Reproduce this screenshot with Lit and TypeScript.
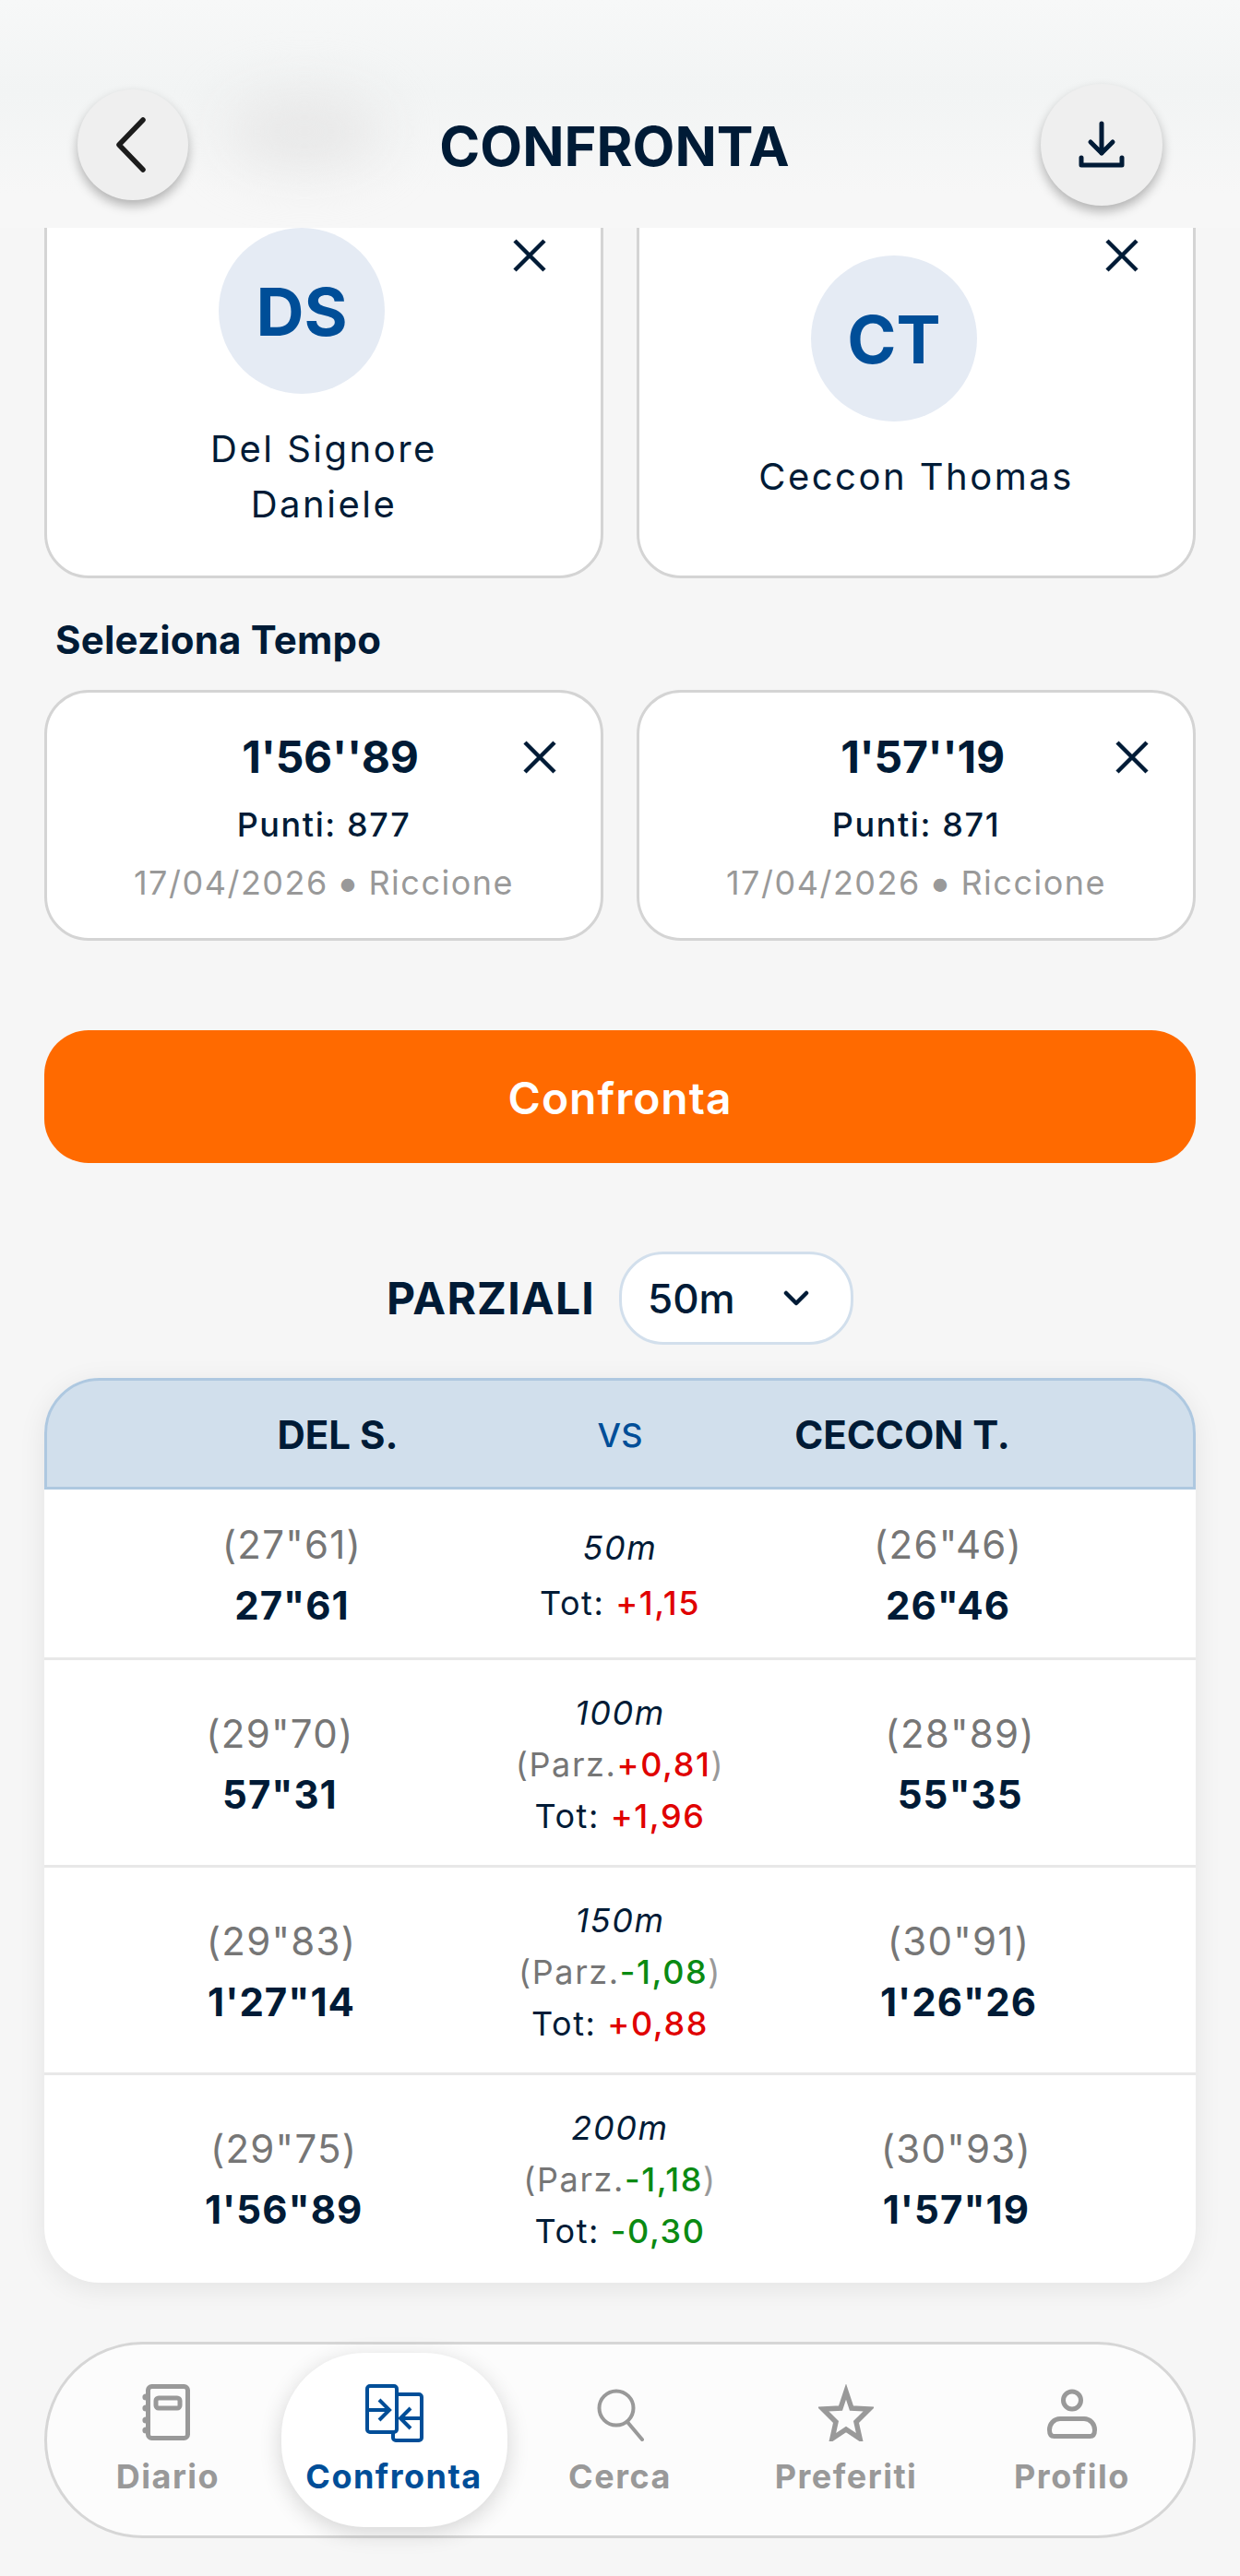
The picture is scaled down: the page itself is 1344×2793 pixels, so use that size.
import { LitElement, html, css, svg } from 'lit'
import { customElement } from 'lit/decorators.js'

type Diff = { value: string; up: boolean }
type Split = {
  dist: string
  lap?: Diff
  tot: Diff
  left: [string, string]
  right: [string, string]
}

const splits: Split[] = [
  { dist: '50m', tot: { value: '+1,15', up: true }, left: ['(27"61)', '27"61'], right: ['(26"46)', '26"46'] },
  { dist: '100m', lap: { value: '+0,81', up: true }, tot: { value: '+1,96', up: true }, left: ['(29"70)', '57"31'], right: ['(28"89)', '55"35'] },
  { dist: '150m', lap: { value: '-1,08', up: false }, tot: { value: '+0,88', up: true }, left: ['(29"83)', '1\'27"14'], right: ['(30"91)', '1\'26"26'] },
  { dist: '200m', lap: { value: '-1,18', up: false }, tot: { value: '-0,30', up: false }, left: ['(29"75)', '1\'56"89'], right: ['(30"93)', '1\'57"19'] },
]

const closeIcon = html`<svg width="36" height="36" viewBox="0 0 36 36" fill="none" stroke="currentColor" stroke-width="4.5"><path d="M2 2l32 32M34 2L2 34" /></svg>`

const navIcons = {
  diario: svg`<rect x="6.5" y="2.5" width="43" height="56" rx="4" fill="none" stroke="currentColor" stroke-width="5"/>
    <circle cx="4" cy="14" r="3.6" fill="currentColor"/><circle cx="4" cy="26" r="3.6" fill="currentColor"/>
    <circle cx="4" cy="39" r="3.6" fill="currentColor"/><circle cx="4" cy="50" r="3.6" fill="currentColor"/>
    <rect x="15" y="15" width="26" height="11" rx="3" fill="none" stroke="currentColor" stroke-width="5"/>`,
  confronta: svg`<rect x="30" y="11" width="31" height="50" rx="3" fill="none" stroke="currentColor" stroke-width="4"/>
    <rect x="2" y="2" width="32" height="50" rx="3" fill="#fff" stroke="currentColor" stroke-width="4"/>
    <path d="M2 28h24M15 17l11 11-11 11" fill="none" stroke="currentColor" stroke-width="4"/>
    <path d="M61 37H38M49 26L38 37l11 11" fill="none" stroke="currentColor" stroke-width="4"/>`,
  cerca: svg`<circle cx="22" cy="22" r="18.5" fill="none" stroke="currentColor" stroke-width="4"/>
    <path d="M34 37l16 19" fill="none" stroke="currentColor" stroke-width="4" stroke-linecap="round"/>`,
  preferiti: svg`<path d="M30 8l6 18 19 1-14 14 4 18-15-10-15 10 4-18L5 27l19-1z" fill="none" stroke="currentColor" stroke-width="5.500"/>`,
  profilo: svg`<circle cx="27" cy="12.500" r="9.500" fill="none" stroke="currentColor" stroke-width="5"/>
    <path d="M14 32.500h26c7 0 11.500 6 11.500 12 0 5-2 7-5 7H7.500c-3 0-5-2-5-7 0-6 4.500-12 11.500-12z" fill="none" stroke="currentColor" stroke-width="5"/>`,
}

const navItems = [
  { id: 'diario', label: 'Diario', w: 56, h: 62, vb: '0 0 56 62', mt: 0 },
  { id: 'confronta', label: 'Confronta', w: 63, h: 63, vb: '0 0 63 63', mt: 0 },
  { id: 'cerca', label: 'Cerca', w: 52, h: 58, vb: '0 0 52 58', mt: 4 },
  { id: 'preferiti', label: 'Preferiti', w: 60, h: 62, vb: '0 0 60 62', mt: 0 },
  { id: 'profilo', label: 'Profilo', w: 54, h: 54, vb: '0 0 54 54', mt: 5 },
] as const

@customElement('app-root')
export class AppRoot extends LitElement {
  static styles = css`
    :host {
      display: block;
      position: relative;
      height: 2793px;
      overflow: hidden;
      background: #f6f6f6;
      color: #001b36;
      font-family: Inter, "Liberation Sans", sans-serif;
    }

    /* top bar sits over the scrolled content */
    .topbar {
      position: absolute;
      inset: 0 0 auto 0;
      height: 247px;
      z-index: 5;
      overflow: hidden;
      background: linear-gradient(#f7f8f8, #f2f4f4 40%, #f7f7f7 85%);
    }
    .smudge {
      position: absolute;
      left: 245px;
      top: 100px;
      width: 170px;
      height: 85px;
      border-radius: 50%;
      background: #e8e8e8;
      filter: blur(28px);
    }
    .round {
      position: absolute;
      display: flex;
      align-items: center;
      justify-content: center;
      border-radius: 50%;
      background: #efefef;
      box-shadow: 0 6px 12px rgba(0, 0, 0, 0.28);
    }
    .back { left: 84px; top: 97px; width: 120px; height: 120px; color: #1c1c1c; }
    .download { left: 1128px; top: 91px; width: 132px; height: 132px; }
    .topbar h1 {
      position: absolute;
      left: 0;
      right: 0;
      top: 123px;
      margin: 0;
      padding-right: 12px;
      text-align: center;
      font-size: 59.5px;
      line-height: 70px;
      font-weight: 700;
    }

    main {
      padding: 197px 48px 0;
    }
    .pair {
      display: grid;
      grid-template-columns: 606px 606px;
      justify-content: space-between;
    }
    .card {
      position: relative;
      box-sizing: border-box;
      background: #fff;
      border: 3px solid #d4d4d4;
      border-radius: 48px;
    }
    .close {
      position: absolute;
      display: flex;
      color: #001b36;
    }
    .athlete {
      height: 430px;
      display: flex;
      flex-direction: column;
      align-items: center;
      justify-content: center;
      gap: 30px;
    }
    .athlete .close { right: 59px; top: 59px; }
    .avatar {
      width: 180px;
      height: 180px;
      border-radius: 50%;
      margin-left: -48px;
      background: #e5ebf4;
      color: #004e98;
      display: flex;
      align-items: center;
      justify-content: center;
      font-size: 72px;
      font-weight: 700;
    }
    .name {
      text-align: center;
      font-size: 40px;
      line-height: 60px;
      letter-spacing: 2.5px;
    }
    .section-label {
      margin: 42px 0 0 12px;
      font-size: 42px;
      line-height: 50px;
      font-weight: 700;
      letter-spacing: 0.2px;
    }
    .times {
      margin-top: 29px;
    }
    .time {
      height: 272px;
      display: flex;
      flex-direction: column;
      align-items: center;
    }
    .time .close { right: 48px; top: 52px; }
    .time-value {
      margin-top: 40px;
      font-size: 48px;
      line-height: 60px;
      font-weight: 700;
      letter-spacing: -0.3px;
      padding-left: 14px;
    }
    .points {
      margin-top: 21px;
      font-size: 36px;
      line-height: 44px;
      font-weight: 500;
      letter-spacing: 1.6px;
    }
    .date {
      margin-top: 19px;
      font-size: 36px;
      line-height: 44px;
      color: #999;
      letter-spacing: 1.5px;
    }
    .date span {
      font-size: 46px;
      line-height: 0;
      vertical-align: -3px;
      margin: 0 -3.5px;
    }

    .cta {
      display: flex;
      align-items: center;
      justify-content: center;
      margin-top: 97px;
      height: 144px;
      padding-top: 2px;
      box-sizing: border-box;
      border-radius: 48px;
      background: #ff6a00;
      color: #fff;
      font-size: 48px;
      font-weight: 600;
      letter-spacing: 1px;
    }

    .split-head {
      display: flex;
      align-items: center;
      justify-content: center;
      gap: 26px;
      margin-top: 96px;
    }
    .split-head strong {
      font-size: 48px;
      font-weight: 700;
      letter-spacing: 1.2px;
    }
    .select {
      box-sizing: border-box;
      width: 254px;
      height: 101px;
      padding: 0 44px 0 28px;
      display: flex;
      align-items: center;
      justify-content: space-between;
      background: #fff;
      border: 3px solid #d2dfec;
      border-radius: 48px;
      font-size: 44px;
      font-weight: 500;
    }

    .table {
      margin-top: 36px;
      border-radius: 60px;
      background: #fff;
      box-shadow: 0 6px 30px rgba(0, 0, 0, 0.08);
    }
    .table-head {
      box-sizing: border-box;
      height: 121px;
      padding-top: 2px;
      display: grid;
      grid-template-columns: repeat(3, 306px);
      justify-content: center;
      align-items: center;
      text-align: center;
      background: #d1dfec;
      border: 3px solid #aec8e0;
      border-radius: 60px 60px 0 0;
      font-size: 42px;
      font-weight: 700;
    }
    .table-head .vs {
      color: #004e98;
      font-size: 36px;
      font-weight: 500;
    }
    .row {
      box-sizing: border-box;
      display: flex;
      align-items: center;
      padding: 33px 0 29px;
      border-bottom: 3px solid #e8e8e8;
      text-align: center;
    }
    .row:last-child { border-bottom-color: transparent; }
    .side { flex: 1; }
    .side .lap {
      font-size: 42px;
      line-height: 54px;
      color: #767676;
      letter-spacing: 1.25px;
    }
    .side .cum {
      margin-top: 12px;
      font-size: 42px;
      line-height: 54px;
      font-weight: 700;
      letter-spacing: 1px;
    }
    .mid {
      font-size: 36px;
      line-height: 56px;
      letter-spacing: 1.6px;
      margin: -4px 0;
    }
    .short .mid { line-height: 60px; }
    .mid .dist { font-style: italic; }
    .mid .parz { color: #767676; white-space: nowrap; }
    .mid .parz i { font-style: normal; color: #999; }
    .mid b { font-weight: 500; }
    .up { color: #e00000; }
    .down { color: #0a8a12; }

    nav {
      box-sizing: border-box;
      margin-top: 64px;
      height: 213px;
      padding: 0 6px;
      display: grid;
      grid-template-columns: repeat(5, 245px);
      justify-content: center;
      align-items: center;
      border: 3px solid #d6d6d6;
      border-radius: 107px;
      background: #fcfcfc;
    }
    .tab {
      height: 189px;
      display: flex;
      flex-direction: column;
      align-items: center;
      padding-top: 34px;
      box-sizing: border-box;
      color: #999;
      font-size: 36px;
      font-weight: 700;
      letter-spacing: 1.5px;
    }
    .tab .icon {
      height: 63px;
      display: flex;
    }
    .tab span { margin-top: 15px; line-height: 44px; }
    .tab.active {
      color: #004e98;
      background: #fff;
      border-radius: 90px;
      box-shadow: 0 6px 24px rgba(0, 0, 0, 0.16);
    }
  `

  renderDiff(d: Diff) {
    return html`<b class=${d.up ? 'up' : 'down'}>${d.value}</b>`
  }

  renderRow(s: Split) {
    return html`
      <div class="row ${s.lap ? '' : 'short'}">
        <div class="side">
          <div class="lap">${s.left[0]}</div>
          <div class="cum">${s.left[1]}</div>
        </div>
        <div class="mid">
          <div class="dist">${s.dist}</div>
          ${s.lap ? html`<div class="parz">(Parz.${this.renderDiff(s.lap)}<i>)</i></div>` : ''}
          <div>Tot: ${this.renderDiff(s.tot)}</div>
        </div>
        <div class="side">
          <div class="lap">${s.right[0]}</div>
          <div class="cum">${s.right[1]}</div>
        </div>
      </div>
    `
  }

  render() {
    return html`
      <header class="topbar">
        <div class="smudge"></div>
        <div class="round back">
          <svg width="60" height="60" viewBox="0 0 60 60" fill="none" stroke="currentColor" stroke-width="5.500" stroke-linecap="round" stroke-linejoin="round"><path d="M41 3L15 30l26 27" /></svg>
        </div>
        <h1>CONFRONTA</h1>
        <div class="round download">
          <svg width="50" height="52" viewBox="0 0 50 52" fill="none" stroke="currentColor" stroke-width="5" stroke-linecap="round" stroke-linejoin="round"><path d="M25 3v32M13 23l12 12 12-12M3 40v8h44v-8" /></svg>
        </div>
      </header>

      <main>
        <section class="pair">
          <div class="card athlete">
            <span class="close">${closeIcon}</span>
            <div class="avatar">DS</div>
            <div class="name">Del Signore<br />Daniele</div>
          </div>
          <div class="card athlete">
            <span class="close">${closeIcon}</span>
            <div class="avatar">CT</div>
            <div class="name">Ceccon Thomas</div>
          </div>
        </section>

        <div class="section-label">Seleziona Tempo</div>

        <section class="pair times">
          <div class="card time">
            <span class="close">${closeIcon}</span>
            <div class="time-value">1'56''89</div>
            <div class="points">Punti: 877</div>
            <div class="date">17/04/2026 <span>•</span> Riccione</div>
          </div>
          <div class="card time">
            <span class="close">${closeIcon}</span>
            <div class="time-value">1'57''19</div>
            <div class="points">Punti: 871</div>
            <div class="date">17/04/2026 <span>•</span> Riccione</div>
          </div>
        </section>

        <div class="cta">Confronta</div>

        <div class="split-head">
          <strong>PARZIALI</strong>
          <div class="select">
            50m
            <svg width="30" height="18" viewBox="0 0 30 18" fill="none" stroke="currentColor" stroke-width="4.500" stroke-linecap="round" stroke-linejoin="round"><path d="M4 3l11 11L26 3" /></svg>
          </div>
        </div>

        <section class="table">
          <div class="table-head">
            <div>DEL S.</div>
            <div class="vs">VS</div>
            <div>CECCON T.</div>
          </div>
          ${splits.map((s) => this.renderRow(s))}
        </section>

        <nav>
          ${navItems.map(
            (n) => html`
              <div class="tab ${n.id === 'confronta' ? 'active' : ''}">
                <div class="icon">
                  <svg width=${n.w} height=${n.h} viewBox=${n.vb} style="margin-top:${n.mt}px">${navIcons[n.id]}</svg>
                </div>
                <span>${n.label}</span>
              </div>
            `,
          )}
        </nav>
      </main>
    `
  }
}
